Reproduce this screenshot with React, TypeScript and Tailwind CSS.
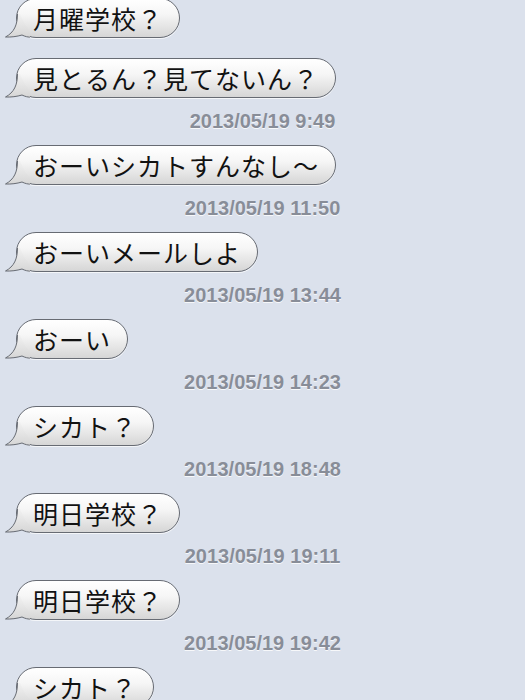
import React from 'react';

type Item = { text: string; time?: string };

const messages: Item[] = [
  { text: '月曜学校？' },
  { text: '見とるん？見てないん？', time: '2013/05/19 9:49' },
  { text: 'おーいシカトすんなし〜', time: '2013/05/19 11:50' },
  { text: 'おーいメールしよ', time: '2013/05/19 13:44' },
  { text: 'おーい', time: '2013/05/19 14:23' },
  { text: 'シカト？', time: '2013/05/19 18:48' },
  { text: '明日学校？', time: '2013/05/19 19:11' },
  { text: '明日学校？', time: '2013/05/19 19:42' },
  { text: 'シカト？' },
];

const Tail: React.FC = () => (
  <svg
    className="absolute left-[-13px] bottom-[-1px] pointer-events-none"
    width="26"
    height="27"
    viewBox="0 0 26 27"
  >
    <defs>
      <linearGradient id="tailFill" x1="0" y1="0" x2="0" y2="1">
        <stop offset="0%" stopColor="#f2f2f2" />
        <stop offset="100%" stopColor="#d6d6d6" />
      </linearGradient>
    </defs>
    <path
      d="M13.5 3 C13.5 14, 10 21.5, 1.5 26 C7 26.3, 13 25.5, 18 24 C21 25.5, 24 26.2, 26 26 L26 20 L20 12 L16 3 Z"
      fill="url(#tailFill)"
    />
    <path
      d="M13.5 3 C13.5 14, 10 21.5, 1.5 26 C7 26.3, 13 25.5, 18 24 C21 25.5, 24 26.3, 28 26.3"
      fill="none"
      stroke="#676b73"
      strokeWidth="1"
    />
  </svg>
);

const Bubble: React.FC<{ text: string }> = ({ text }) => (
  <div className="flex pl-[16px]">
    <div className="relative h-[40px] rounded-[20px] border border-[#676b73] bg-[linear-gradient(180deg,#ffffff_0%,#f6f6f6_40%,#e6e6e6_70%,#d6d6d6_100%)] pl-[16px] pr-[16px] shadow-[0_1px_0_rgba(255,255,255,0.7)]">
      <span className="block text-[25px] leading-[38px] text-[#121212] [font-family:'Noto_Sans_CJK_JP','Noto_Sans',sans-serif] tracking-[1px]">
        {text}
      </span>
      <Tail />
    </div>
  </div>
);

export default function App() {
  return (
    <div className="h-[700px] w-[525px] overflow-hidden bg-[#dbe1ec]">
      <div className="flex flex-col -mt-[2px]">
        {messages.map((m, i) => (
          <div key={i} className={i === 1 ? 'mt-[20px]' : i > 1 ? 'mt-[14px]' : ''}>
            <Bubble text={m.text} />
            {m.time && (
              <div className="mt-[13px] h-[20px] text-center text-[20px] font-bold leading-[20px] text-[#888d98] [font-family:'Liberation_Sans',Arial,sans-serif] [text-shadow:0_1px_0_rgba(255,255,255,0.8)]">
                {m.time}
              </div>
            )}
          </div>
        ))}
      </div>
    </div>
  );
}
